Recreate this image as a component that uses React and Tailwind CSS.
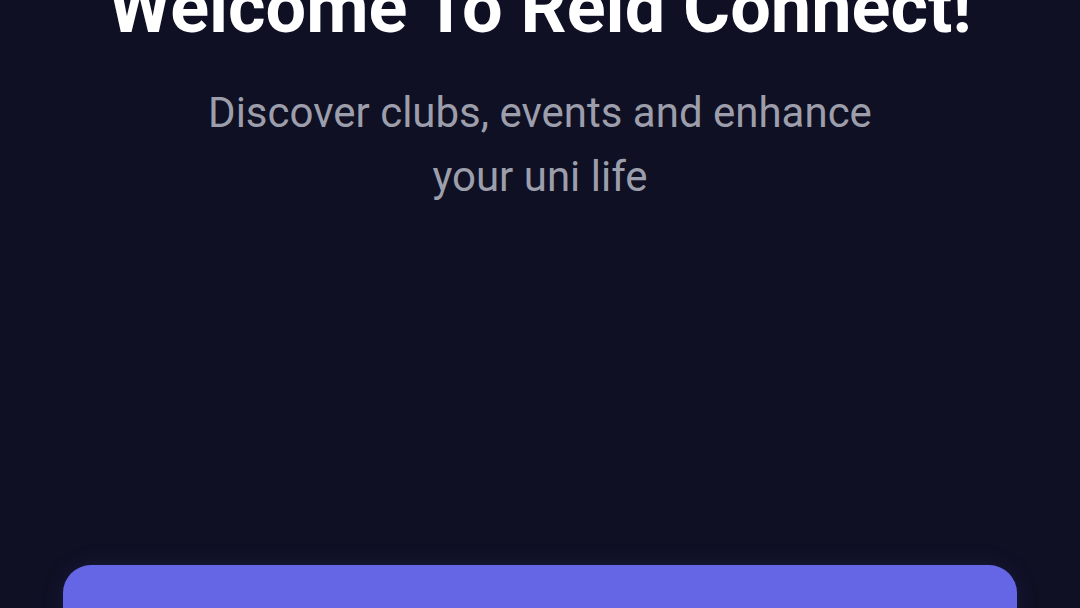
export default function App() {
  return (
    <div
      className="h-[608px] w-full overflow-hidden bg-[#0f1023] flex flex-col items-center px-[63px]"
      style={{ fontFamily: "Roboto, 'Liberation Sans', sans-serif" }}
    >
      <h1 className="mt-[-34px] text-[72px] leading-[84px] font-bold text-white text-center whitespace-nowrap">
        Welcome To Reid Connect!
      </h1>
      <p className="mt-[31px] w-[700px] text-[42px] leading-[64px] text-[#9d9eab] text-center">
        Discover clubs, events and enhance your uni life
      </p>
      <div className="mt-auto mb-[-40px] h-[83px] w-full shrink-0 rounded-[28px] bg-[#6466e6] shadow-[0_0_24px_rgba(99,102,241,0.12)]" />
    </div>
  );
}
